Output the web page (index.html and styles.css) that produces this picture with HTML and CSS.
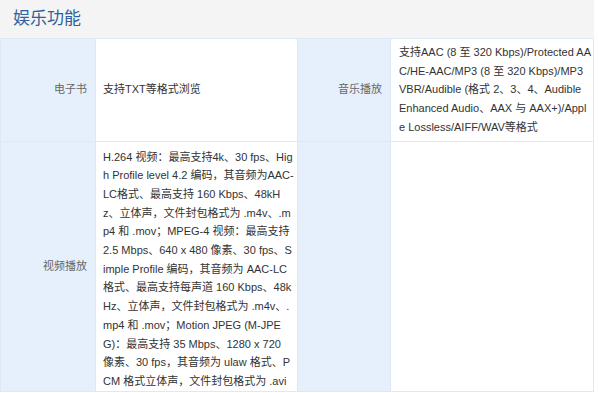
FILE: index.html
```html
<!DOCTYPE html>
<html lang="zh-CN">
<head>
  <meta charset="UTF-8">
  <meta name="viewport" content="width=device-width, initial-scale=1.0">
  <title>娱乐功能</title>
  <link rel="stylesheet" href="styles.css">
</head>
<body>
  <div class="section">
    <h2 class="section-title">娱乐功能</h2>
    <table class="spec-table">
      <colgroup>
        <col class="col-label">
        <col class="col-value">
        <col class="col-label2">
        <col class="col-value2">
      </colgroup>
      <tr class="row-short">
        <th>电子书</th>
        <td>支持TXT等格式浏览</td>
        <th>音乐播放</th>
        <td class="wide">支持AAC (8 至 320 Kbps)/Protected AAC/HE-AAC/MP3 (8 至 320 Kbps)/MP3 VBR/Audible (格式 2、3、4、Audible Enhanced Audio、AAX 与 AAX+)/Apple Lossless/AIFF/WAV等格式</td>
      </tr>
      <tr class="row-long">
        <th>视频播放</th>
        <td>H.264 视频：最高支持4k、30 fps、High Profile level 4.2 编码，其音频为AAC-LC格式、最高支持 160 Kbps、48kHz、立体声，文件封包格式为 .m4v、.mp4 和 .mov；MPEG-4 视频：最高支持 2.5 Mbps、640 x 480 像素、30 fps、Simple Profile 编码，其音频为 AAC-LC 格式、最高支持每声道 160 Kbps、48kHz、立体声，文件封包格式为 .m4v、.mp4 和 .mov；Motion JPEG (M-JPEG)：最高支持 35 Mbps、1280 x 720 像素、30 fps，其音频为 ulaw 格式、PCM 格式立体声，文件封包格式为 .avi</td>
        <th></th>
        <td></td>
      </tr>
    </table>
  </div>
</body>
</html>
```

FILE: styles.css
```css
body {
  margin: 0;
  background-color: #fff;
  font-family: "Liberation Sans", "Noto Sans CJK SC", sans-serif;
}
.section {
  width: 594px;
}
.section-title {
  margin: 0;
  height: 38px;
  line-height: 38px;
  padding-left: 13px;
  background-color: #f4f4f4;
  color: #2f5f9f;
  font-size: 17px;
  font-weight: normal;
}
.spec-table {
  width: 594px;
  border-collapse: collapse;
  table-layout: fixed;
  font-size: 11px;
  line-height: 18.7px;
}
.col-label {
  width: 95px;
}
.col-value {
  width: 202px;
}
.col-label2 {
  width: 93px;
}
.spec-table th,
.spec-table td {
  border: 1px solid #dfe9f6;
  vertical-align: middle;
  word-break: break-all;
}
.spec-table th {
  background-color: #e6f0fc;
  color: #666;
  font-weight: normal;
  text-align: right;
  padding: 0 8px;
}
.spec-table td {
  background-color: #fff;
  color: #333;
  padding: 4px 3px 4px 7px;
}
.spec-table td.wide {
  padding: 4px 2px 4px 8px;
}
.row-long td {
  padding: 6px 3px 0 7px;
}
```
